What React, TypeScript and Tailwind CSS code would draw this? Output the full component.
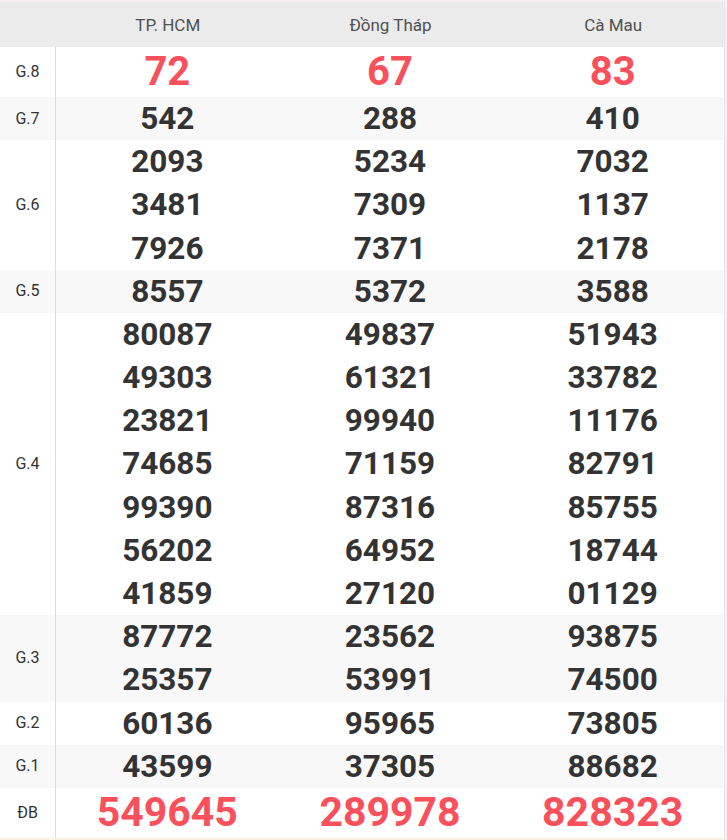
const data: { label: string; rows: string[][]; red?: boolean; big?: boolean }[] = [
  { label: "G.8", rows: [["72", "67", "83"]], red: true },
  { label: "G.7", rows: [["542", "288", "410"]] },
  {
    label: "G.6",
    rows: [
      ["2093", "5234", "7032"],
      ["3481", "7309", "1137"],
      ["7926", "7371", "2178"],
    ],
  },
  { label: "G.5", rows: [["8557", "5372", "3588"]] },
  {
    label: "G.4",
    rows: [
      ["80087", "49837", "51943"],
      ["49303", "61321", "33782"],
      ["23821", "99940", "11176"],
      ["74685", "71159", "82791"],
      ["99390", "87316", "85755"],
      ["56202", "64952", "18744"],
      ["41859", "27120", "01129"],
    ],
  },
  {
    label: "G.3",
    rows: [
      ["87772", "23562", "93875"],
      ["25357", "53991", "74500"],
    ],
  },
  { label: "G.2", rows: [["60136", "95965", "73805"]] },
  { label: "G.1", rows: [["43599", "37305", "88682"]] },
  { label: "ĐB", rows: [["549645", "289978", "828323"]], red: true, big: true },
];

const provinces = ["TP. HCM", "Đồng Tháp", "Cà Mau"];

export default function App() {
  return (
    <div className="w-[727px] h-[840px] bg-white font-['Roboto',sans-serif] flex">
      <div className="w-[724px] flex flex-col">
        <div className="h-[2px] bg-[#fbeef0]" />
        <div className="grid grid-cols-[56px_1fr_1fr_1fr] h-[45px] bg-[#ebebeb] items-center text-[17px] text-[#505050]">
          <div />
          {provinces.map((p) => (
            <div key={p} className="text-center pl-px pt-[3px]">
              {p}
            </div>
          ))}
        </div>
        {data.map((g, i) => (
          <div
            key={g.label}
            className={`grid grid-cols-[56px_1fr_1fr_1fr] ${i % 2 === 1 ? "bg-[#f8f8f8]" : "bg-white"}`}
          >
            <div className="border-r border-[#dddddd] flex items-center justify-center text-[16px] text-[#333]">
              {g.label}
            </div>
            {[0, 1, 2].map((c) => (
              <div key={c} className="flex flex-col">
                {g.rows.map((r, j) => (
                  <div
                    key={j}
                    className={
                      g.red
                        ? `h-[50px] flex items-center justify-center font-bold text-[#f9515c] ${g.big ? "text-[41px]" : "text-[40px]"}`
                        : "h-[43.2px] flex items-center justify-center font-bold text-[31.5px] text-[#333]"
                    }
                  >
                    {r[c]}
                  </div>
                ))}
              </div>
            ))}
          </div>
        ))}
        <div className="h-[2px] bg-[#fbf1e2]" />
      </div>
      <div className="w-[3px] border-l border-[#e6e6ea] bg-[#f3f3f6]" />
    </div>
  );
}
